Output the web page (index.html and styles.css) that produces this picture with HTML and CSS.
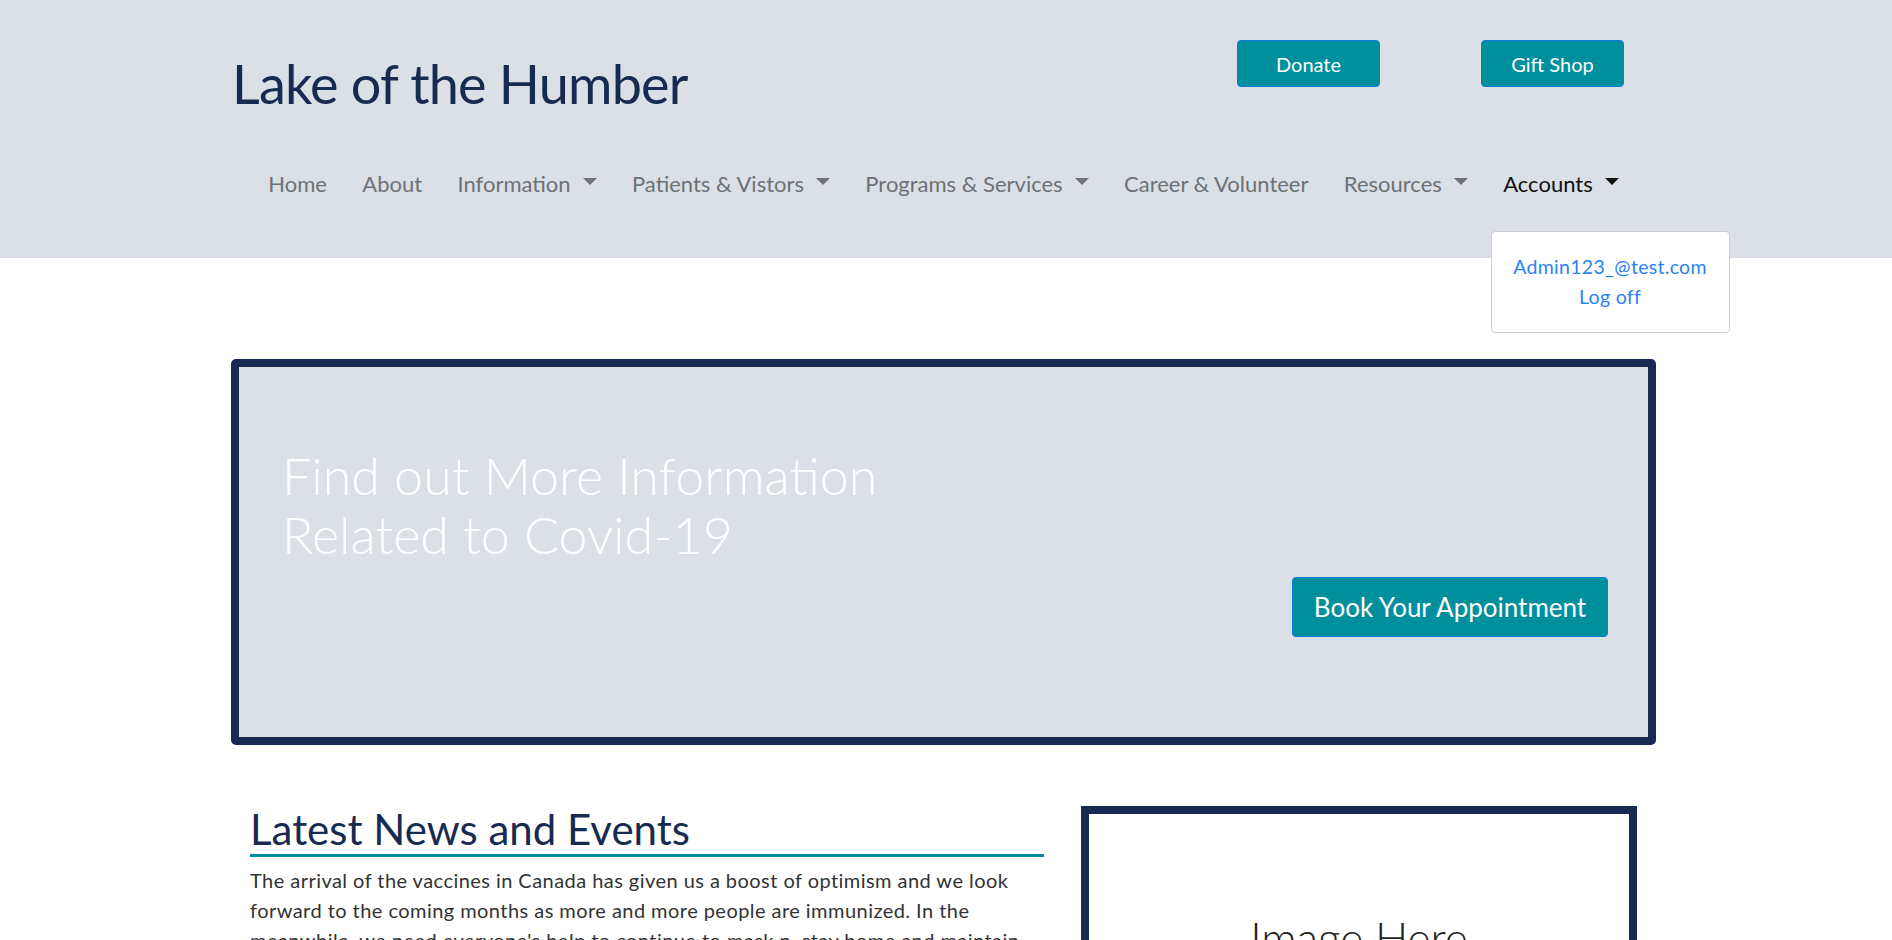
FILE: index.html
```html
<!DOCTYPE html>
<html lang="en">
<head>
<meta charset="utf-8">
<title>Lake of the Humber</title>
<link rel="stylesheet" href="styles.css">
</head>
<body>
<header class="site-header">
  <div class="container">
    <div class="brand-row">
      <h1 class="brand">Lake of the Humber</h1>
      <div class="top-actions">
        <a class="btn btn-teal" href="#">Donate</a>
        <a class="btn btn-teal" href="#">Gift Shop</a>
      </div>
    </div>
    <nav class="main-nav">
      <a class="nav-link" href="#">Home</a>
      <a class="nav-link" href="#">About</a>
      <a class="nav-link caret" href="#">Information</a>
      <a class="nav-link caret" href="#">Patients &amp; Vistors</a>
      <a class="nav-link caret" href="#">Programs &amp; Services</a>
      <a class="nav-link" href="#">Career &amp; Volunteer</a>
      <a class="nav-link caret" href="#">Resources</a>
      <div class="nav-item-dropdown">
        <a class="nav-link caret active" href="#">Accounts</a>
        <div class="dropdown-menu">
          <a href="#">Admin123_@test.com</a>
          <a href="#">Log off</a>
        </div>
      </div>
    </nav>
  </div>
</header>

<main class="container">
  <section class="hero">
    <h2 class="hero-title">Find out More Information<br>Related to Covid-19</h2>
    <div class="hero-action">
      <a class="btn btn-teal btn-lg" href="#">Book Your Appointment</a>
    </div>
  </section>

  <section class="news-row">
    <div class="news">
      <h2 class="news-title">Latest News and Events</h2>
      <p class="news-text">The arrival of the vaccines in Canada has given us a boost of optimism and we look forward to the coming months as more and more people are immunized. In the meanwhile, we need everyone's help to continue to mask n, stay home and maintain physical distancing to keep our community safe.</p>
    </div>
    <div class="image-box">
      <span>Image Here</span>
    </div>
  </section>
</main>
</body>
</html>
```
FILE: styles.css
```css
* { box-sizing: border-box; }
html, body { margin: 0; padding: 0; }
body {
  font-family: "Lato", "Noto Sans", sans-serif;
  color: #212529;
  background: #fff;
  overflow: hidden;
}
a { text-decoration: none; }

.container {
  width: 1430px;
  padding-right: 5px;
  margin: 0 auto;
}

.site-header {
  background: #dae0e6;
  height: 258px;
}
.brand-row {
  display: flex;
  align-items: flex-start;
  height: 155px;
}
.brand {
  margin: 48px 0 0 1px;
  white-space: nowrap;
  flex-shrink: 0;
  font-weight: 400;
  font-size: 54px;
  line-height: 72px;
  color: #172a51;
  letter-spacing: -0.8px;
}
.top-actions {
  display: flex;
  gap: 101px;
  margin: 40px 32px 0 auto;
}
.btn {
  display: inline-flex;
  align-items: center;
  justify-content: center;
  background: #008f9c;
  color: #fff;
  border: 1px solid #0a7bd6;
  border-radius: 4px;
  font-size: 20px;
}
.top-actions .btn {
  width: 143px;
  height: 47px;
}

.main-nav {
  display: flex;
  justify-content: center;
  align-items: center;
  height: 56px;
}
.nav-link {
  display: inline-flex;
  align-items: center;
  padding: 0 17.7px;
  font-size: 22px;
  color: #6e7175;
}
.nav-link.caret::after {
  content: "";
  display: inline-block;
  margin-left: 12px;
  border-top: 7px solid currentColor;
  border-left: 7px solid transparent;
  border-right: 7px solid transparent;
  transform: translateY(-2px);
}
.nav-link.active { color: #111; }

.nav-item-dropdown { position: relative; }
.dropdown-menu {
  position: absolute;
  top: 61px;
  left: 5px;
  width: 239px;
  height: 102px;
  background: #fff;
  border: 1px solid #ccd;
  border-radius: 4px;
  display: flex;
  flex-direction: column;
  align-items: center;
  justify-content: center;
  gap: 4px;
  z-index: 5;
}
.dropdown-menu a {
  color: #2a82f6;
  font-size: 19.5px;
  line-height: 26px;
  letter-spacing: 0.3px;
}

.hero {
  margin-top: 101px;
  height: 386px;
  background: #dae0e6;
  border: 8px solid #172a51;
  border-radius: 5px;
  padding: 79px 40px 0 43px;
  display: flex;
  flex-direction: column;
}
.hero-title {
  margin: 0;
  font-weight: 300;
  font-size: 52px;
  line-height: 59px;
  color: #fff;
}
.hero-action {
  display: flex;
  justify-content: flex-end;
  margin-top: 13px;
}
.btn-lg {
  width: 316px;
  height: 60px;
  font-size: 26px;
}

.news-row {
  display: flex;
  justify-content: space-between;
  margin-top: 61px;
  padding: 0 19px;
}
.news { width: 794px; }
.news-title {
  margin: 0;
  font-weight: 400;
  font-size: 42px;
  line-height: 46px;
  color: #172a51;
  padding-bottom: 2px;
  border-bottom: 3px solid #008f9c;
}
.news-text {
  margin: 8px 0 0;
  font-size: 20px;
  line-height: 30px;
  letter-spacing: 0.45px;
  color: #333;
}
.image-box {
  width: 556px;
  height: 340px;
  border: 8px solid #172a51;
  display: flex;
  justify-content: center;
  padding-top: 97px;
}
.image-box span {
  font-size: 44px;
  font-weight: 300;
  color: #222;
  line-height: 52px;
}
```
